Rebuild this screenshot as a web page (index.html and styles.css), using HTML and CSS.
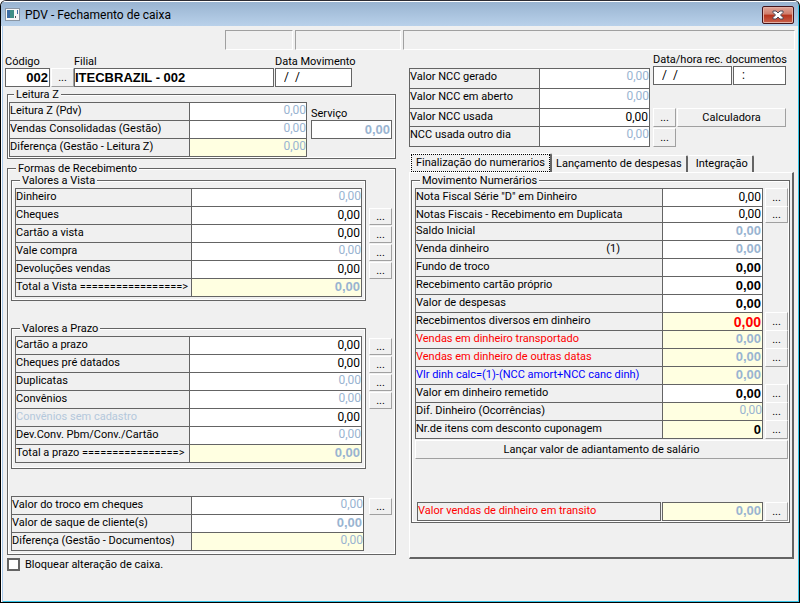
FILE: index.html
```html
<!DOCTYPE html>
<html lang="pt-BR">
<head>
<meta charset="utf-8">
<title>PDV - Fechamento de caixa</title>
<link rel="stylesheet" href="styles.css">
</head>
<body>
<div class="window">
  <header class="titlebar">
    <svg class="app-icon" width="15" height="13" viewBox="0 0 15 13" aria-hidden="true">
      <rect x="0.5" y="0.5" width="14" height="12" fill="#f8f8f8" stroke="#8a96a4"/>
      <rect x="2" y="2" width="7" height="8" fill="#3f8f86"/>
      <rect x="2" y="2" width="3" height="8" fill="#3c6ea5"/>
      <rect x="10" y="8" width="1" height="2" fill="#555"/>
      <rect x="12" y="2" width="1" height="4" fill="#3c6ea5"/>
    </svg>
    <h1>PDV - Fechamento de caixa</h1>
    <button class="close" type="button" aria-label="Fechar">
      <svg width="12" height="10" viewBox="0 0 12 10" aria-hidden="true">
        <path d="M1 1H4L6 3L8 1H11V2.500L8.500 5L11 7.500V9H8L6 7L4 9H1V7.500L3.500 5L1 2.500Z" fill="#fff" stroke="#4a4a58" stroke-width="1"/>
      </svg>
    </button>
  </header>
  <div class="status"><span></span><span></span><span></span></div>

  <main>
    <section class="left">
      <div class="branch">
        <label for="codigo">Código</label>
        <label for="filial" class="col-filial">Filial</label>
        <label for="data" class="col-data">Data Movimento</label>
        <input id="codigo" class="field num strong" value="002">
        <button type="button" class="btn">...</button>
        <input id="filial" class="field strong" value="ITECBRAZIL - 002">
        <input id="data" class="field date" value="/  /">
      </div>

      <fieldset class="reading">
        <legend>Leitura Z</legend>
        <div class="split">
          <div class="rows narrow">
            <div class="row"><label for="z1">Leitura Z (Pdv)</label><input id="z1" class="off" value="0,00" readonly></div>
            <div class="row"><label for="z2">Vendas Consolidadas (Gestão)</label><input id="z2" class="off" value="0,00" readonly></div>
            <div class="row"><label for="z3">Diferença (Gestão - Leitura Z)</label><input id="z3" class="off sum" value="0,00" readonly></div>
          </div>
          <div class="service">
            <label for="serv">Serviço</label>
            <input id="serv" class="field num strong off" value="0,00" readonly>
          </div>
        </div>
      </fieldset>

      <fieldset class="receipts">
        <legend>Formas de Recebimento</legend>
        <div class="block">
          <fieldset class="group">
            <legend>Valores a Vista</legend>
            <div class="rows">
              <div class="row"><label for="v1">Dinheiro</label><input id="v1" class="off" value="0,00" readonly></div>
              <div class="row"><label for="v2">Cheques</label><input id="v2" value="0,00"></div>
              <div class="row"><label for="v3">Cartão a vista</label><input id="v3" value="0,00"></div>
              <div class="row"><label for="v4">Vale compra</label><input id="v4" class="off" value="0,00" readonly></div>
              <div class="row"><label for="v5">Devoluções vendas</label><input id="v5" value="0,00"></div>
              <div class="row"><label for="v6">Total a Vista =================&gt;</label><input id="v6" class="off sum strong" value="0,00" readonly></div>
            </div>
          </fieldset>
          <div class="actions second">
            <button type="button" class="btn">...</button>
            <button type="button" class="btn">...</button>
            <button type="button" class="btn">...</button>
            <button type="button" class="btn">...</button>
          </div>
        </div>
        <div class="block term">
          <fieldset class="group">
            <legend>Valores a Prazo</legend>
            <div class="rows narrow">
              <div class="row"><label for="p1">Cartão a prazo</label><input id="p1" value="0,00"></div>
              <div class="row"><label for="p2">Cheques pré datados</label><input id="p2" value="0,00"></div>
              <div class="row"><label for="p3">Duplicatas</label><input id="p3" class="off" value="0,00" readonly></div>
              <div class="row"><label for="p4">Convênios</label><input id="p4" class="off" value="0,00" readonly></div>
              <div class="row"><label for="p5" class="faded">Convênios sem cadastro</label><input id="p5" value="0,00"></div>
              <div class="row"><label for="p6">Dev.Conv. Pbm/Conv./Cartão</label><input id="p6" class="off" value="0,00" readonly></div>
              <div class="row"><label for="p7">Total a prazo ================&gt;</label><input id="p7" class="off sum strong" value="0,00" readonly></div>
            </div>
          </fieldset>
          <div class="actions first">
            <button type="button" class="btn">...</button>
            <button type="button" class="btn">...</button>
            <button type="button" class="btn">...</button>
            <button type="button" class="btn">...</button>
          </div>
        </div>
        <div class="block balance">
          <div class="rows wide">
            <div class="row"><label for="s1">Valor do troco em cheques</label><input id="s1" class="off" value="0,00" readonly></div>
            <div class="row"><label for="s2">Valor de saque de cliente(s)</label><input id="s2" class="off strong" value="0,00" readonly></div>
            <div class="row"><label for="s3">Diferença (Gestão - Documentos)</label><input id="s3" class="off sum" value="0,00" readonly></div>
          </div>
          <div class="actions">
            <button type="button" class="btn">...</button>
          </div>
        </div>
      </fieldset>
      <label class="lock"><input type="checkbox">Bloquear alteração de caixa.</label>
    </section>

    <section class="right">
      <div class="top">
        <div class="rows ncc">
          <div class="row tall"><label for="n1">Valor NCC gerado</label><input id="n1" class="off" value="0,00" readonly></div>
          <div class="row tall"><label for="n2">Valor NCC em aberto</label><input id="n2" class="off" value="0,00" readonly></div>
          <div class="row"><label for="n3">Valor NCC usada</label><input id="n3" value="0,00"></div>
          <div class="row tall"><label for="n4">NCC usada outro dia</label><input id="n4" class="off" value="0,00" readonly></div>
        </div>
        <div class="docs">
          <label for="rec">Data/hora rec. documentos</label>
          <div class="docs-fields">
            <input id="rec" class="field date" value="/  /">
            <input class="field date" value=":" aria-label="Hora rec. documentos">
          </div>
          <div class="docs-actions">
            <button type="button" class="btn">...</button>
            <button type="button" class="btn">Calculadora</button>
            <button type="button" class="btn">...</button>
          </div>
        </div>
      </div>

      <div class="tabs" role="tablist">
        <button type="button" role="tab" aria-selected="true" class="tab active"><span>Finalização do numerarios</span></button>
        <button type="button" role="tab" aria-selected="false" class="tab">Lançamento de despesas</button>
        <button type="button" role="tab" aria-selected="false" class="tab last">Integração</button>
      </div>
      <div class="panel" role="tabpanel">
        <fieldset class="cash">
          <legend>Movimento Numerários</legend>
          <div class="rows with-btn">
            <div class="row"><label for="m1">Nota Fiscal Série "D" em Dinheiro</label><input id="m1" value="0,00"><button type="button" class="btn">...</button></div>
            <div class="row short"><label for="m2">Notas Fiscais - Recebimento em Duplicata</label><input id="m2" value="0,00"><button type="button" class="btn">...</button></div>
            <div class="row"><label for="m3">Saldo Inicial</label><input id="m3" class="off strong" value="0,00" readonly></div>
            <div class="row"><label for="m4">Venda dinheiro<span class="note">(1)</span></label><input id="m4" class="off strong" value="0,00" readonly></div>
            <div class="row"><label for="m5">Fundo de troco</label><input id="m5" class="strong" value="0,00"></div>
            <div class="row"><label for="m6">Recebimento cartão próprio</label><input id="m6" class="strong" value="0,00"></div>
            <div class="row"><label for="m7">Valor de despesas</label><input id="m7" class="strong" value="0,00"></div>
            <div class="row"><label for="m8">Recebimentos diversos em dinheiro</label><input id="m8" class="sum strong alert" value="0,00"><button type="button" class="btn">...</button></div>
            <div class="row"><label for="m9" class="red">Vendas em dinheiro transportado</label><input id="m9" class="off sum strong" value="0,00" readonly><button type="button" class="btn">...</button></div>
            <div class="row"><label for="m10" class="red">Vendas em dinheiro de outras datas</label><input id="m10" class="off sum strong" value="0,00" readonly><button type="button" class="btn">...</button></div>
            <div class="row"><label for="m11" class="blue">Vlr dinh calc=(1)-(NCC amort+NCC canc dinh)</label><input id="m11" class="off sum strong" value="0,00" readonly></div>
            <div class="row"><label for="m12">Valor em dinheiro remetido</label><input id="m12" class="strong" value="0,00"><button type="button" class="btn">...</button></div>
            <div class="row"><label for="m13">Dif. Dinheiro (Ocorrências)</label><input id="m13" class="off sum" value="0,00" readonly><button type="button" class="btn">...</button></div>
            <div class="row"><label for="m14">Nr.de itens com desconto cuponagem</label><input id="m14" class="sum strong" value="0"><button type="button" class="btn">...</button></div>
          </div>
          <button type="button" class="btn advance">Lançar valor de adiantamento de salário</button>
          <div class="rows with-btn transit">
            <div class="row"><label for="m15" class="red">Valor vendas de dinheiro em transito</label><input id="m15" class="off sum strong" value="0,00" readonly><button type="button" class="btn">...</button></div>
          </div>
        </fieldset>
      </div>
    </section>
  </main>
</div>
</body>
</html>
```
FILE: styles.css
```css
* { box-sizing: border-box; }

:root {
  --face: #f0f0f0;
  --line: #646464;
  --shade: #a0a0a0;
  --muted: #99b4d1;
  --total: #ffffe1;
}

body {
  margin: 0;
  background: #fff;
  color: #000;
  font: 11px/12px Roboto, "Liberation Sans", sans-serif;
}

input, button { font: inherit; color: inherit; margin: 0; border-radius: 0; }
input { min-width: 0; width: 100%; outline: none; }

.window {
  min-height: 100vh;
  border: 1px solid #000;
  border-top-color: #2c2c34;
  border-radius: 6px 6px 0 0;
  background: var(--face);
  box-shadow: inset 1px 0 #fff, inset 2px 0 #a9c9ea, inset -1px -1px #35c3e6;
  overflow: hidden;
}

.titlebar {
  display: flex;
  align-items: center;
  height: 25px;
  margin-right: 1px;
  padding: 0 4px 0 4px;
  border-top: 1px solid #fff;
  background: linear-gradient(#99b4d1, #b9d1ea);
}

.titlebar h1 {
  flex: 1;
  margin: 0 0 0 5px;
  padding-top: 2px;
  font: 12px/16px Roboto, sans-serif;
}

.close {
  display: grid;
  place-items: center;
  width: 32px;
  height: 18px;
  margin-top: 2px;
  padding: 0;
  border: 1px solid #43131a;
  border-radius: 2px;
  background: linear-gradient(#e0a598, #cf7b69 45%, #b6331c 50%, #c9604a);
  box-shadow: inset 0 0 0 1px #e3b0a4;
}

.status {
  display: grid;
  grid-template-columns: 68px 106px 1fr;
  gap: 2px;
  margin: 4px 4px 4px 224px;
}

.status span {
  height: 20px;
  border: 1px solid #fff;
  border-top-color: var(--shade);
  border-left-color: var(--shade);
}

main {
  display: grid;
  grid-template-columns: minmax(0, 391fr) minmax(0, 385fr);
  gap: 13px;
  padding: 0 5px 4px 4px;
}

/* Fields and buttons */

.field {
  height: 19px;
  padding: 0 1px 1px;
  border: 1px solid var(--line);
  background: #fff;
}

.num { text-align: right; }
.date { padding-left: 8px; font-size: 12px; white-space: pre; }
.strong { font: bold 13px/13px "Liberation Sans", sans-serif; }
#filial { padding-left: 0; }
.off { color: var(--muted); }

.btn {
  height: 19px;
  padding: 0;
  border: 1px solid var(--shade);
  border-top-color: #fff;
  border-left-color: #fff;
  background: var(--face);
}

/* Label and value rows */

.row {
  display: grid;
  grid-template-columns: 177px 1fr;
  height: 19px;
}

.row + .row { margin-top: -1px; }
.narrow .row { grid-template-columns: 175px 1fr; }
.wide .row { grid-template-columns: 181px 1fr; }
.reading .narrow .row { grid-template-columns: 181px 1fr; }
.ncc .row { grid-template-columns: 131px 1fr; }
.with-btn .row { grid-template-columns: 248px 1fr 25px; }
.row.tall { height: 21px; }
.row.short { height: 17px; }

.row label {
  display: flex;
  border: 1px solid var(--line);
  line-height: 15px;
  white-space: nowrap;
}

.row input {
  width: auto;
  margin-left: -1px;
  padding: 0 1px 0 0;
  border: 1px solid var(--line);
  background: #fff;
  text-align: right;
}

.row input:not(.strong) { font: 12px/13px Roboto, sans-serif; }
.row input.off { padding: 0 0 2px; }
.row.tall input.off { padding-bottom: 4px; }
.row input.off.strong { padding: 0 1px 2px 0; }
.row input.sum { background: var(--total); }
.row input.alert { color: #f00; font-size: 14px; }
.row .btn { margin-left: 2px; }
.row.short .btn { height: 17px; }

.row .red { color: #f00; border-color: var(--line); }
.row .blue { color: #00f; border-color: var(--line); }
.row .faded { color: #b4c8dc; border-color: var(--line); }
.note { margin-left: auto; padding-right: 42px; }

/* Group boxes */

fieldset {
  min-width: 0;
  margin: 0;
  border: 1px solid var(--line);
  box-shadow: inset 0 0 0 1px #fff;
}

legend {
  height: 11px;
  margin-left: 5px;
  padding: 0 2px;
  background: var(--face);
  line-height: 11px;
  white-space: nowrap;
}

/* Left column */

.branch {
  display: grid;
  grid-template-columns: 45px 1px 23px 1fr 1px 77px;
  grid-template-rows: 12px 19px;
  margin: 2px 44px 0 0;
}

.branch label { grid-row: 1; white-space: nowrap; }
.branch .col-filial { grid-column: 4; }
.branch .col-data { grid-column: 6; }
.branch #codigo { grid-column: 1; }
.branch .btn { grid-column: 3; }
.branch #filial { grid-column: 4; }
.branch #data { grid-column: 6; }

.reading { margin: 2px 0 0 2px; padding: 2px 3px 1px 1px; }

.split {
  display: grid;
  grid-template-columns: 298px 1fr;
  gap: 4px;
}

.service { display: grid; align-content: start; padding-top: 6px; }

.receipts { margin: 4px 0 0 2px; padding: 1px 3px 3px; }

.block {
  display: grid;
  grid-template-columns: 1fr 23px;
  gap: 3px;
}

.group { padding: 2px 3px 3px; }
.term { margin-top: 22px; }
.term .group { padding-bottom: 5px; }
.balance { margin-top: 27px; }
.balance .rows { margin-right: 2px; }

.actions {
  display: grid;
  gap: 1px;
  align-content: start;
  padding-top: 2px;
}

.actions .btn { height: 17px; }
.actions.first { padding-top: 15px; }
.actions.second { padding-top: 33px; }

.lock {
  display: flex;
  align-items: center;
  gap: 5px;
  margin: 3px 0 0 2px;
}

.lock input {
  appearance: none;
  width: 13px;
  height: 13px;
  border: 2px solid var(--line);
  background: #fff;
}

/* Right column */

.top {
  display: grid;
  grid-template-columns: 241px minmax(0, 1fr);
  gap: 3px;
}

.ncc { padding-top: 14px; }
.docs { padding-right: 8px; }
.docs > label { display: block; white-space: nowrap; }

.docs-fields {
  display: grid;
  grid-template-columns: 79px 1fr;
  gap: 1px;
}

.docs-actions {
  display: grid;
  grid-template-columns: 23px 1fr;
  gap: 1px;
  margin-top: 23px;
}

.tabs {
  display: flex;
  align-items: flex-end;
  margin-top: 6px;
  padding-left: 1px;
}

.tab {
  height: 17px;
  padding: 0 4px;
  border: 0 solid #fff;
  border-top-width: 1px;
  border-right: 2px solid var(--line);
  border-radius: 2px 2px 0 0;
  background: var(--face);
  white-space: nowrap;
}

.tab.last { padding-left: 8px; }

.tab.active {
  height: 19px;
  padding: 0;
  border-left-width: 1px;
}

.tab span {
  display: block;
  padding: 2px 4px;
  border: 1px dotted #000;
}

.panel {
  padding: 2px 2px 34px 1px;
  border-top: 1px solid #fff;
  border-left: 1px solid #fff;
  border-right: 2px solid var(--line);
  border-bottom: 2px solid var(--line);
}

.cash { padding: 2px 1px 1px 3px; }
.advance { width: 100%; margin-top: 1px; }
.transit { margin: 43px 0 0 2px; }
.transit .row { grid-template-columns: 244px 1fr 25px; }
.transit .row input { margin-left: 1px; }
```
